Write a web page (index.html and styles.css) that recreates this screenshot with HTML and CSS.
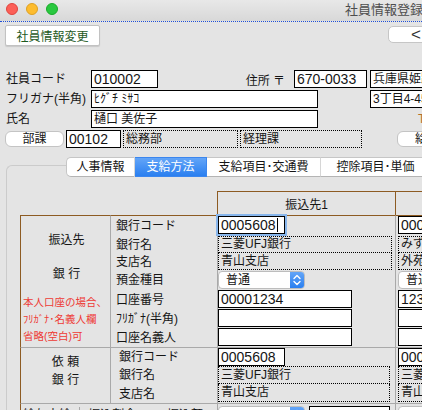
FILE: index.html
```html
<!DOCTYPE html>
<html lang="ja">
<head>
    <meta charset="UTF-8">
    <meta name="viewport" content="width=device-width, initial-scale=1.0">
    <title>社員情報登録</title>
    <link rel="stylesheet" href="styles.css">
</head>
<body>
<div class="window">
    <div class="titlebar">
        <div class="lights">
            <span class="light red"></span>
            <span class="light yellow"></span>
            <span class="light green"></span>
        </div>
        <div class="title">社員情報登録</div>
    </div>

    <div class="toolbar">
        <button class="btnEdit">社員情報変更</button>
        <button class="btnNav">&lt;</button>
    </div>

    <div class="head">
        <div class="row">
            <label class="lbl">社員コード</label>
            <div class="field num w67">010002</div>
            <label class="addrLbl">住所 〒</label>
            <div class="field num w73">670-0033</div>
            <div class="field wide ml3">兵庫県姫路市本町</div>
        </div>
        <div class="row">
            <label class="lbl">フリガナ(半角)</label>
            <div class="field w227">ﾋｸﾞﾁ ﾐｻｺ</div>
            <div class="field wide ml52">3丁目4-45</div>
        </div>
        <div class="row">
            <label class="lbl">氏名</label>
            <div class="field w227">樋口 美佐子</div>
            <span class="tel">TEL</span>
        </div>
        <div class="row">
            <button class="btnRound bukaBtn">部課</button>
            <div class="field num w55 ml2">00102</div>
            <div class="field dotted w115 ml2">総務部</div>
            <div class="field dotted w122 ml2">経理課</div>
            <button class="btnRound kyuBtn">給与</button>
        </div>
    </div>

    <div class="tabs">
        <div class="tab first">人事情報</div>
        <div class="tab active">支給方法</div>
        <div class="tab t3">支給項目･交通費</div>
        <div class="tab t4">控除項目･単価</div>
    </div>

    <div class="panel">
        <table class="pay">
            <colgroup>
                <col class="cSide">
                <col class="cLbl">
                <col class="cVal">
                <col class="cVal">
            </colgroup>
            <tr>
                <td colspan="2"></td>
                <th>振込先1</th>
                <th class="last">振込先2</th>
            </tr>

            <!-- 振込先 -->
            <tr class="gTop brown">
                <td class="side" rowspan="7">
                    <p class="sideTitle">振込先</p>
                    <p class="sideTitle">銀 行</p>
                    <p class="note">本人口座の場合、<br>ﾌﾘｶﾞﾅ･名義人欄<br>省略(空白)可</p>
                </td>
                <td class="lbl">銀行コード</td>
                <td class="val"><div class="field num w67 mb2 focus">0005608<span class="caret"></span></div></td>
                <td class="val alt"><div class="field num w67 mb2">0001</div></td>
            </tr>
            <tr>
                <td class="lbl">銀行名</td>
                <td class="val"><div class="field dotted w174 h17">三菱UFJ銀行</div></td>
                <td class="val alt"><div class="field dotted w174 h17">みずほ銀行</div></td>
            </tr>
            <tr>
                <td class="lbl">支店名</td>
                <td class="val"><div class="field dotted noTop w174 h17">青山支店</div></td>
                <td class="val alt"><div class="field dotted noTop w174 h17">外苑前支店</div></td>
            </tr>
            <tr>
                <td class="lbl">預金種目</td>
                <td class="val">
                    <div class="select">
                        <span class="selTxt">普通</span>
                        <span class="stepper"><svg width="14" height="18" viewBox="0 0 14 18"><path d="M4 7.5 L7 4.5 L10 7.5 M4 10.5 L7 13.5 L10 10.5" fill="none" stroke="#fff" stroke-width="1.4" stroke-linecap="round" stroke-linejoin="round"/></svg></span>
                    </div>
                </td>
                <td class="val alt">
                    <div class="select">
                        <span class="selTxt">普通</span>
                        <span class="stepper"><svg width="14" height="18" viewBox="0 0 14 18"><path d="M4 7.5 L7 4.5 L10 7.5 M4 10.5 L7 13.5 L10 10.5" fill="none" stroke="#fff" stroke-width="1.4" stroke-linecap="round" stroke-linejoin="round"/></svg></span>
                    </div>
                </td>
            </tr>
            <tr>
                <td class="lbl">口座番号</td>
                <td class="val"><div class="field num w134 mb1">00001234</div></td>
                <td class="val alt"><div class="field num w134 mb1">1234567</div></td>
            </tr>
            <tr>
                <td class="lbl">ﾌﾘｶﾞﾅ(半角)</td>
                <td class="val"><div class="field w134 mb1"></div></td>
                <td class="val alt"><div class="field w134 mb1"></div></td>
            </tr>
            <tr>
                <td class="lbl">口座名義人</td>
                <td class="val"><div class="field w134 mb1"></div></td>
                <td class="val alt"><div class="field w134 mb1"></div></td>
            </tr>

            <!-- 依頼銀行 -->
            <tr class="gTop">
                <td class="side side2" rowspan="3">
                    <p class="sideTitle">依 頼</p>
                    <p class="sideTitle">銀 行</p>
                </td>
                <td class="lbl lbl2">銀行コード</td>
                <td class="val"><div class="field num w67">0005608</div></td>
                <td class="val alt"><div class="field num w67">0005608</div></td>
            </tr>
            <tr>
                <td class="lbl lbl2">銀行名</td>
                <td class="val"><div class="field dotted w172 h18">三菱UFJ銀行</div></td>
                <td class="val alt"><div class="field dotted w172 h18">三菱UFJ銀行</div></td>
            </tr>
            <tr>
                <td class="lbl lbl2">支店名</td>
                <td class="val"><div class="field dotted noTop w172 h18 mb1">青山支店</div></td>
                <td class="val alt"><div class="field dotted noTop w172 h18 mb1">青山支店</div></td>
            </tr>

            <!-- 支給割合 -->
            <tr class="gTop">
                <td colspan="2" class="side split">
                    <span class="splitA">給与支給</span>
                    <span class="splitB">振込割合(%)・振込額</span>
                </td>
                <td class="val">
                    <div class="inline">
                        <div class="select low">
                            <span class="selTxt"></span>
                            <span class="stepper"><svg width="14" height="18" viewBox="0 0 14 18"><path d="M4 7.5 L7 4.5 L10 7.5 M4 10.5 L7 13.5 L10 10.5" fill="none" stroke="#fff" stroke-width="1.4" stroke-linecap="round" stroke-linejoin="round"/></svg></span>
                        </div>
                        <div class="field num w81 low"></div>
                    </div>
                </td>
                <td class="val alt">
                    <div class="select low">
                        <span class="selTxt"></span>
                        <span class="stepper"><svg width="14" height="18" viewBox="0 0 14 18"><path d="M4 7.5 L7 4.5 L10 7.5 M4 10.5 L7 13.5 L10 10.5" fill="none" stroke="#fff" stroke-width="1.4" stroke-linecap="round" stroke-linejoin="round"/></svg></span>
                    </div>
                </td>
            </tr>
        </table>
    </div>
</div>
</body>
</html>
```

FILE: styles.css
```css
* {
    box-sizing: border-box;
}

html, body {
    margin: 0;
    overflow: hidden;
    background: #e4e4e4;
}

body {
    font-family: "Liberation Sans", "Noto Sans CJK JP", sans-serif;
    font-size: 12px;
    color: #151515;
}

.window {
    width: 640px;
}

/* title bar */
.titlebar {
    height: 22px;
    display: flex;
    padding-top: 3px;
    background: linear-gradient(#e8e8e8, #d8d8d8);
    border-bottom: 1px dotted #1f4fd6;
}

.lights {
    display: flex;
    gap: 8px;
    margin-left: 6px;
}

.light {
    width: 12px;
    height: 12px;
    border-radius: 50%;
}
.red { background: #fc5f57; border: 1px solid #e0443e; }
.yellow { background: #fdbc2e; border: 1px solid #dea123; }
.green { background: #29c83f; border: 1px solid #1aab29; }

.title {
    margin-left: 287px;
    font-size: 13px;
    line-height: 14px;
    color: #4d4d4d;
}

/* toolbar */
.toolbar {
    display: flex;
    align-items: flex-start;
    margin-top: 3px;
}

button {
    font-family: inherit;
    font-size: 12px;
    padding: 0;
    background: #fff;
    color: #151515;
}

.btnEdit {
    margin-left: 5px;
    width: 95px;
    height: 21px;
    border: 1px solid #c2c2c2;
    border-radius: 2px;
    box-shadow: 0 1px 1px rgba(0, 0, 0, 0.12);
    color: #1e5a1e;
}

.btnNav {
    margin-left: 288px;
    margin-top: 1px;
    width: 56px;
    height: 17px;
    border: 1px solid #c6c6c6;
    border-radius: 5px;
    font-size: 17px;
    line-height: 14px;
    font-weight: 300;
    color: #333;
}

/* header fields */
.head {
    margin-top: 24px;
}

.row {
    display: flex;
    align-items: center;
    height: 18px;
    margin-bottom: 2px;
}

.row .lbl {
    margin-left: 6px;
    width: 85px;
    line-height: 18px;
}

.addrLbl {
    width: 136px;
    padding-right: 9px;
    text-align: right;
}

.tel {
    margin-left: 100px;
    color: #b4722a;
}

.field {
    height: 18px;
    flex-shrink: 0;
    padding: 0 2px;
    border: 1px solid #000;
    background: #fff;
    line-height: 16px;
    white-space: nowrap;
    overflow: hidden;
    font-size: 12px;
}

.num {
    font-size: 14px;
}

.dotted {
    background: transparent;
    border: 1px dotted #000;
}

.noTop {
    border-top: none;
}

.w55 { width: 55px; }
.w67 { width: 67px; }
.w73 { width: 73px; }
.w81 { width: 81px; }
.w115 { width: 115px; }
.w122 { width: 122px; }
.w134 { width: 134px; }
.w172 { width: 172px; }
.w174 { width: 174px; }
.w227 { width: 227px; }
.wide { width: 200px; }
.h17 { height: 17px; line-height: 15px; }
.h18 { height: 18px; }
.noTop.h17 { line-height: 16px; }
.noTop.h18 { line-height: 17px; }
.ml2 { margin-left: 2px; }
.ml3 { margin-left: 3px; }
.ml52 { margin-left: 52px; }
.mb1 { margin-bottom: 1px; }
.mb2 { margin-bottom: 2px; }

.btnRound {
    height: 16px;
    border: 1px solid #c4c4c4;
    border-radius: 6px;
    line-height: 14px;
}

.bukaBtn {
    margin-left: 5px;
    width: 59px;
}

.kyuBtn {
    margin-left: 35px;
    width: 60px;
}

/* tabs */
.tabs {
    position: relative;
    z-index: 1;
    display: flex;
    margin-top: 9px;
    margin-left: 66px;
    height: 20px;
}

.tab {
    height: 20px;
    line-height: 19px;
    text-align: center;
    background: #fff;
    border-top: 1px solid #c6c6c6;
    border-bottom: 1px solid #b4b4b4;
    border-right: 1px solid #d6d6d6;
}

.tab.first {
    width: 69px;
    border-left: 1px solid #c6c6c6;
    border-radius: 5px 0 0 5px;
}

.tab.active {
    width: 72px;
    color: #fff;
    background: linear-gradient(#63a5f8, #2a7ff0);
    border-color: #3b86ee;
}

.tab.t3 { width: 114px; }
.tab.t4 { width: 110px; }

/* panel */
.panel {
    margin-top: -12px;
    margin-left: 6px;
    padding: 25px 0 0 13px;
    border-top: 1px solid #cbcbcb;
    border-left: 1px solid #cbcbcb;
    border-radius: 6px 0 0 0;
    height: 300px;
}

.pay {
    table-layout: fixed;
    border-collapse: separate;
    border-spacing: 0;
    width: 553px;
}

.cSide { width: 90px; }
.cLbl { width: 107px; }
.cVal { width: 178px; }

.pay td, .pay th {
    padding: 0;
}

.pay th {
    height: 24px;
    font-weight: normal;
    border-top: 1px solid #8d5b22;
    border-left: 1px solid #8d5b22;
    text-align: center;
}

.pay th.last {
    border-right: 1px solid #8d5b22;
}

.pay .gTop td {
    border-top: 1px solid #a9a9a9;
}

.pay .gTop.brown td {
    border-top-color: #8d5b22;
}

.side {
    vertical-align: top;
    border-left: 1px solid #8d5b22;
    padding-top: 16px !important;
    padding-left: 2px !important;
    text-align: center;
}

.side p {
    margin: 0;
    line-height: 17px;
}

.sideTitle + .sideTitle {
    margin-top: 17px;
}

.side2 {
    padding-top: 6px !important;
    padding-left: 0 !important;
}

.side2 .sideTitle + .sideTitle {
    margin-top: 1px;
}

.note {
    margin-top: 11px !important;
    padding-left: 0;
    text-align: left;
    font-size: 10.5px;
    color: #ee3b35;
}

.pay .lbl {
    border-left: 1px solid #a9a9a9;
    padding-left: 5px;
    line-height: 14px;
    vertical-align: middle;
}

.pay .lbl2 {
    padding-left: 8px;
}

.val {
    border-left: 1px solid #a9a9a9;
    vertical-align: top;
}

.val.alt {
    padding-left: 2px !important;
}

.focus {
    box-shadow: 0 0 0 2px #88b6ec;
}

.caret {
    display: inline-block;
    width: 1px;
    height: 14px;
    margin-left: 1px;
    vertical-align: -2px;
    background: #000;
}

.select {
    display: flex;
    width: 87px;
    height: 18px;
    margin-top: 1px;
    margin-bottom: 1px;
    background: #fff;
    border: 1px solid #bdbdbd;
    border-radius: 4px;
    overflow: hidden;
}

.selTxt {
    flex: 1;
    padding-left: 7px;
    line-height: 16px;
}

.stepper {
    width: 14px;
    background: linear-gradient(#63a5f8, #2a7ff0);
    display: flex;
    align-items: center;
}

.stepper svg {
    display: block;
}

.inline {
    display: flex;
    gap: 4px;
}

.low {
    margin-top: 2px;
}

.split {
    padding-top: 1px !important;
    text-align: left;
    vertical-align: top;
    white-space: nowrap;
}

.splitA {
    display: inline-block;
    width: 57px;
    border-right: 1px solid #a9a9a9;
    line-height: 17px;
}

.splitB {
    padding-left: 5px;
}
```
